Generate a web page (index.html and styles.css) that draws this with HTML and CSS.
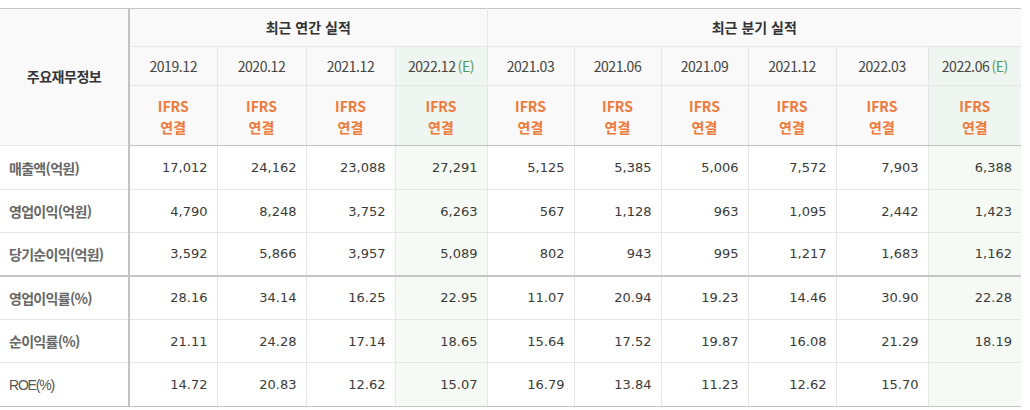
FILE: index.html
```html
<!DOCTYPE html>
<html lang="ko">
<head>
<meta charset="utf-8">
<title>주요재무정보</title>
<link rel="stylesheet" href="styles.css">
</head>
<body>
<table class="fin">
  <colgroup>
    <col class="c-label">
    <col class="c88"><col class="c89"><col class="c89"><col class="c92">
    <col class="c87"><col class="c87"><col class="c87"><col class="c88"><col class="c92"><col class="c93">
  </colgroup>
  <thead>
    <tr class="r-group">
      <th class="label-head" rowspan="3">주요재무정보</th>
      <th class="group" colspan="4">최근 연간 실적</th>
      <th class="group sep" colspan="6">최근 분기 실적</th>
    </tr>
    <tr class="r-date">
      <th>2019.12</th>
      <th>2020.12</th>
      <th>2021.12</th>
      <th class="est">2022.12<span class="e">(E)</span></th>
      <th class="sep">2021.03</th>
      <th>2021.06</th>
      <th>2021.09</th>
      <th>2021.12</th>
      <th>2022.03</th>
      <th class="est">2022.06<span class="e">(E)</span></th>
    </tr>
    <tr class="r-ifrs">
      <th><span class="ifrs">IFRS<br>연결</span></th>
      <th><span class="ifrs">IFRS<br>연결</span></th>
      <th><span class="ifrs">IFRS<br>연결</span></th>
      <th class="est"><span class="ifrs">IFRS<br>연결</span></th>
      <th class="sep"><span class="ifrs">IFRS<br>연결</span></th>
      <th><span class="ifrs">IFRS<br>연결</span></th>
      <th><span class="ifrs">IFRS<br>연결</span></th>
      <th><span class="ifrs">IFRS<br>연결</span></th>
      <th><span class="ifrs">IFRS<br>연결</span></th>
      <th class="est"><span class="ifrs">IFRS<br>연결</span></th>
    </tr>
  </thead>
  <tbody>
    <tr class="h44">
      <th class="row-label">매출액(억원)</th>
      <td>17,012</td><td>24,162</td><td>23,088</td><td class="est">27,291</td>
      <td class="sep">5,125</td><td>5,385</td><td>5,006</td><td>7,572</td><td>7,903</td><td class="est">6,388</td>
    </tr>
    <tr class="h43">
      <th class="row-label">영업이익(억원)</th>
      <td>4,790</td><td>8,248</td><td>3,752</td><td class="est">6,263</td>
      <td class="sep">567</td><td>1,128</td><td>963</td><td>1,095</td><td>2,442</td><td class="est">1,423</td>
    </tr>
    <tr class="h43 r-break">
      <th class="row-label">당기순이익(억원)</th>
      <td>3,592</td><td>5,866</td><td>3,957</td><td class="est">5,089</td>
      <td class="sep">802</td><td>943</td><td>995</td><td>1,217</td><td>1,683</td><td class="est">1,162</td>
    </tr>
    <tr class="h44">
      <th class="row-label">영업이익률(%)</th>
      <td>28.16</td><td>34.14</td><td>16.25</td><td class="est">22.95</td>
      <td class="sep">11.07</td><td>20.94</td><td>19.23</td><td>14.46</td><td>30.90</td><td class="est">22.28</td>
    </tr>
    <tr class="h43">
      <th class="row-label">순이익률(%)</th>
      <td>21.11</td><td>24.28</td><td>17.14</td><td class="est">18.65</td>
      <td class="sep">15.64</td><td>17.52</td><td>19.87</td><td>16.08</td><td>21.29</td><td class="est">18.19</td>
    </tr>
    <tr class="h44 r-last">
      <th class="row-label roe">ROE(%)</th>
      <td>14.72</td><td>20.83</td><td>12.62</td><td class="est">15.07</td>
      <td class="sep">16.79</td><td>13.84</td><td>11.23</td><td>12.62</td><td>15.70</td><td class="est"></td>
    </tr>
  </tbody>
</table>
</body>
</html>
```

FILE: styles.css
```css
html, body {
  margin: 0;
  padding: 0;
  background: #fff;
}
body {
  padding-top: 8px;
  font-family: "Noto Sans CJK KR", "Noto Sans", sans-serif;
}
.fin {
  border-collapse: collapse;
  table-layout: fixed;
  width: 1021px;
  border-top: 1px solid #c4c4c4;
  border-bottom: 1px solid #c4c4c4;
}
.c-label { width: 129px; }
.c87 { width: 87px; }
.c88 { width: 88px; }
.c89 { width: 89px; }
.c92 { width: 92px; }
.c93 { width: 93px; }

.fin th, .fin td {
  padding: 0;
  border: 1px solid #e6e6e6;
}
.fin tr > :first-child { border-left: none; }
.fin tr > :last-child { border-right: none; }
.fin thead tr:first-child > * { border-top: 1px solid #c4c4c4; }

.fin thead th {
  background: #f9f9f9;
  text-align: center;
  vertical-align: middle;
}
.fin thead th.est { background: #eff5f0; }

.label-head {
  border-right: 2px solid #c2c2c2 !important;
  font-size: 14px;
  font-weight: 700;
  color: #555;
  letter-spacing: -0.5px;
}
.row-label {
  border-right: 2px solid #c2c2c2 !important;
  text-align: left;
  padding-left: 9px !important;
  font-size: 14px;
  font-weight: 700;
  color: #666;
  letter-spacing: -0.7px;
  white-space: nowrap;
}
.row-label.roe {
  font-family: "Liberation Sans", sans-serif;
  font-weight: 400;
  color: #555;
  letter-spacing: -1.2px;
  font-size: 14px;
}

.r-group { height: 38px; }
.r-group th {
  font-size: 14px;
  font-weight: 700;
  color: #333;
  padding-bottom: 2px;
}
.r-date { height: 39px; }
.r-date th {
  font-size: 14px;
  font-weight: 400;
  color: #444;
  letter-spacing: -0.4px;
}
.e {
  color: #4f9b5f;
  margin-left: 2px;
}
.r-ifrs { height: 60px; }
.r-ifrs th { border-bottom: 1px solid #c2c2c2 !important; }
.ifrs {
  display: inline-block;
  font-size: 14px;
  font-weight: 700;
  line-height: 21px;
  color: #ef7a3a;
  padding-top: 2px;
}

.fin .sep { border-left: 1px solid #d0d0d0; }

.fin tbody tr.h44 { height: 44px; }
.fin tbody tr.h43 { height: 43px; }
.fin tbody td {
  text-align: right;
  padding-right: 9px;
  font-family: "DejaVu Sans", sans-serif;
  font-size: 13px;
  color: #3a3a3a;
  background: #fff;
}
.fin tbody td.est { background: #f5faf5; }
.fin tbody th { background: #fff; }
.r-break > * { border-bottom: 2px solid #c6c6c6 !important; }
.r-last > * { border-bottom: 1px solid #c4c4c4 !important; }
```
